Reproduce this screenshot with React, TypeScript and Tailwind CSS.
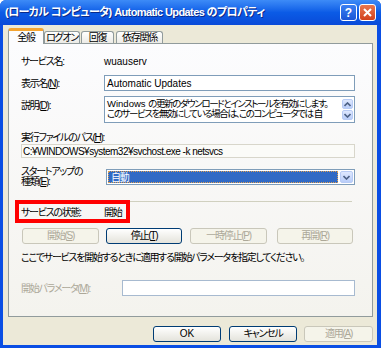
const font = "font-['Liberation_Sans','Noto_Sans_CJK_JP',sans-serif] [font-feature-settings:'palt']";

type BtnProps = { children: React.ReactNode; disabled?: boolean; className?: string };

const Btn = ({ children, disabled, className = "" }: BtnProps) => (
  <div
    className={`flex h-[16px] items-center justify-center whitespace-nowrap rounded-[3px] border text-[10px] leading-none ${
      disabled
        ? "border-[#c9c7ba] bg-[#f5f4ea] text-[#aca899]"
        : "border-[#003c74] bg-linear-to-b from-white to-[#e4e3db] text-black"
    } ${className}`}
  >
    {children}
  </div>
);

const Chevron = ({ up }: { up?: boolean }) => (
  <svg width="7" height="5" viewBox="0 0 7 5">
    <path d={up ? "M0.5 4 L3.5 1 L6.5 4" : "M0.5 1 L3.5 4 L6.5 1"} fill="none" stroke="#4d6185" strokeWidth="1.6" />
  </svg>
);

const ScrollBtn = ({ up }: { up?: boolean }) => (
  <div className="flex h-[10px] w-[11px] items-center justify-center rounded-[2px] border border-[#b8cbf5] bg-linear-to-b from-[#dfe8fe] to-[#b9cdf9]">
    <Chevron up={up} />
  </div>
);

export default function App() {
  return (
    <div className={`flex h-[348px] w-[381px] flex-col overflow-hidden rounded-t-[6px] bg-[#0a4ee4] ${font}`}>
      {/* title bar */}
      <div className="flex h-[25px] items-center bg-linear-to-b from-[#3d8bf7] via-[#0b5be6] to-[#0a4ad8] pl-[5px] pr-[5px]">
        <span className="whitespace-nowrap text-[11px] font-bold leading-none tracking-[-0.6px] text-white [text-shadow:1px_1px_0_#0a2a8a]">
          (ローカル コンピュータ) Automatic Updates のプロパティ
        </span>
        <div className="ml-auto flex gap-[2px]">
          <div className="flex h-[17px] w-[17px] items-center justify-center rounded-[3px] border border-white bg-linear-to-b from-[#3a80f3] to-[#1c55d6] text-[12px] font-bold leading-none text-white">
            ?
          </div>
          <div className="flex h-[17px] w-[17px] items-center justify-center rounded-[3px] border border-white bg-linear-to-b from-[#e9774f] to-[#d2401a]">
            <svg width="9" height="9" viewBox="0 0 9 9">
              <path d="M1 1 L8 8 M8 1 L1 8" stroke="white" strokeWidth="2" />
            </svg>
          </div>
        </div>
      </div>

      {/* body */}
      <div className="mb-[3px] ml-[3px] mr-[4px] flex flex-1 flex-col whitespace-nowrap bg-[#ece9d8] pl-[5px] pr-[4px] pt-[3px] text-[10px] tracking-[-1.25px] text-black">
        {/* tabs */}
        <div className="flex h-[15px] items-end">
          <div className="relative z-10 -mb-px flex h-[16px] w-[36px] items-center justify-center rounded-t-[3px] border-x border-t-[3px] border-x-[#919b9c] border-t-[#f5a430] bg-[#fcfcfe] pb-[1px]">
            全般
          </div>
          <div className="flex h-[12px] w-[36px] items-center justify-center rounded-t-[3px] border border-b-0 border-[#919b9c] bg-linear-to-b from-white to-[#ecebe6]">
            ログオン
          </div>
          <div className="ml-px flex h-[12px] w-[33px] items-center justify-center rounded-t-[3px] border border-b-0 border-[#919b9c] bg-linear-to-b from-white to-[#ecebe6]">
            回復
          </div>
          <div className="ml-[2px] flex h-[12px] w-[47px] items-center justify-center rounded-t-[3px] border border-b-0 border-[#919b9c] bg-linear-to-b from-white to-[#ecebe6]">
            依存関係
          </div>
        </div>

        {/* panel */}
        <div className="flex h-[274px] flex-col border border-[#919b9c] bg-linear-to-b from-[#fcfcfe] to-[#f4f3ee] pl-[12px] pr-[17px] pt-[10px]">
          <div className="flex h-[14px] items-center">
            <span className="w-[83px]">サービス名:</span>
            <span className="tracking-normal">wuauserv</span>
          </div>

          <div className="mt-[7px] flex h-[16px] items-center">
            <span className="w-[83px]">
              表示名(<u>N</u>):
            </span>
            <div className="flex h-full flex-1 items-center border border-[#7f9db9] bg-white px-[2px] tracking-normal">
              Automatic Updates
            </div>
          </div>

          <div className="mt-[5px] flex">
            <span className="w-[83px] pt-[2px]">
              説明(<u>D</u>):
            </span>
            <div className="flex h-[27px] flex-1 border border-[#7f9db9] bg-white">
              <div className="flex-1 overflow-hidden px-[2px] pt-[2px] text-[9.5px] leading-[10px] tracking-[-1.4px]">
                <div>
                  <span className="tracking-normal">Windows </span>の更新のダウンロードとインストールを有効にします。
                </div>
                <div>このサービスを無効にしている場合は、このコンピュータでは 自</div>
              </div>
              <div className="mr-px flex flex-col justify-between py-[2px]">
                <ScrollBtn up />
                <ScrollBtn />
              </div>
            </div>
          </div>

          <div className="mt-[7px] flex h-[14px] items-center">
            実行ファイルのパス(<u>H</u>):
          </div>
          <div className="flex h-[14px] items-center border border-[#d8d6cb] bg-[#fbfbf8] px-[1px] tracking-[-0.5px]">
            C:¥WINDOWS¥system32¥svchost.exe -k netsvcs
          </div>

          <div className="mt-[11px] flex h-[16px] items-center">
            <div className="w-[85px] leading-[10px]">
              <div>スタートアップの</div>
              <div>
                種類(<u>E</u>):
              </div>
            </div>
            <div className="flex h-full flex-1 items-center border border-[#7f9db9] bg-white p-px">
              <div className="flex h-full flex-1 items-center border border-dotted border-[#e0a050] bg-[#316ac5] px-[2px] text-white">
                自動
              </div>
              <div className="ml-[2px] flex h-full w-[13px] items-center justify-center rounded-[2px] border border-[#b8cbf5] bg-linear-to-b from-[#dfe8fe] to-[#b9cdf9]">
                <Chevron />
              </div>
            </div>
          </div>

          <div className="mr-[3px] mt-[16px] h-px bg-[#d0d0bf]" />

          <div className="relative mt-[3px] flex h-[14px] items-center">
            <span className="w-[83px]">サービスの状態:</span>
            <span>開始</span>
            <div className="absolute left-[-6px] top-[-5px] h-[23px] w-[115px] border-[4px] border-[#ff0000]" />
          </div>

          <div className="ml-px mt-[9px] flex">
            <Btn disabled className="w-[77px]">
              開始(<u>S</u>)
            </Btn>
            <Btn className="ml-[7px] w-[76px]">
              停止(<u>T</u>)
            </Btn>
            <Btn disabled className="ml-[8px] w-[77px]">
              一時停止(<u>P</u>)
            </Btn>
            <Btn disabled className="ml-[10px] w-[76px]">
              再開(<u>R</u>)
            </Btn>
          </div>

          <div className="mt-[6px] flex h-[14px] items-center">
            ここでサービスを開始するときに適用する開始パラメータを指定してください。
          </div>

          <div className="mt-[16px] flex h-[16px] items-center">
            <span className="w-[101px] text-[#aca899]">
              開始パラメータ(<u>M</u>):
            </span>
            <div className="h-full flex-1 border border-[#a7bad0] bg-white" />
          </div>
        </div>

        {/* dialog buttons */}
        <div className="mt-[9px] flex justify-end">
          <Btn className="w-[68px] tracking-normal">OK</Btn>
          <Btn className="ml-[8px] w-[68px]">キャンセル</Btn>
          <Btn disabled className="ml-[7px] w-[69px]">
            適用(<u>A</u>)
          </Btn>
        </div>
      </div>
    </div>
  );
}
